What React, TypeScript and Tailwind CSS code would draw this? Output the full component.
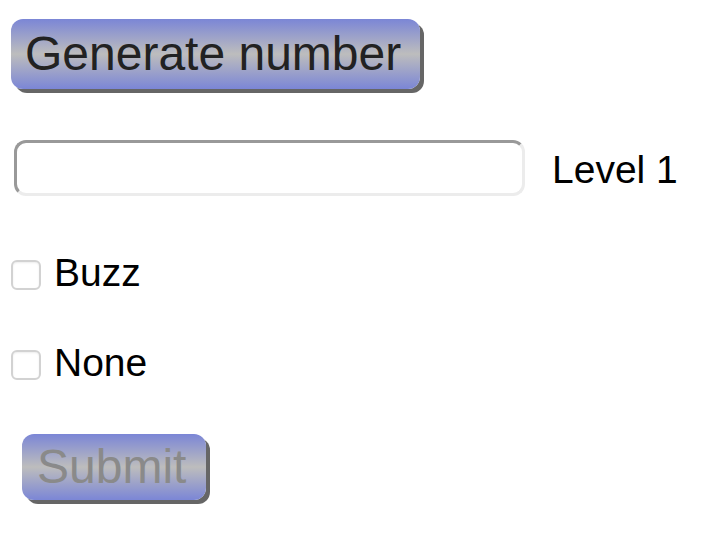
import { useState } from 'react';

const FONT = { fontFamily: '"Liberation Sans", Arial, sans-serif' };

const BUTTON_BASE =
    'flex items-center rounded-[12px] bg-[linear-gradient(to_bottom,#7b86d6,#bdbdbd_50%,#7b86d6)] shadow-[4px_4px_0_0_#666] text-[48px] leading-none';

function Check({ label }: { label: string }) {
    const [checked, setChecked] = useState(false);

    return (
        <label className="flex h-[60px] items-center">
            <input
                type="checkbox"
                checked={checked}
                onChange={(e) => setChecked(e.target.checked)}
                className="ml-[11px] mt-[6px] h-[30px] w-[30px] appearance-none rounded-[6px] border-2 border-[#d2d2d2] bg-white shadow-[inset_0_1px_2px_rgba(0,0,0,0.08)]"
            />
            <span className="ml-[13px] text-[39px] leading-none text-black">{label}</span>
        </label>
    );
}

export default function App() {
    const [value, setValue] = useState('');

    return (
        <div className="flex h-[542px] w-[712px] flex-col bg-white" style={FONT}>
            <button
                type="button"
                className={`${BUTTON_BASE} ml-[11px] mt-[19px] h-[70px] w-[409px] pl-[14px] text-[#222]`}
            >
                Generate number
            </button>

            <div className="mt-[51px] flex items-center">
                <input
                    value={value}
                    onChange={(e) => setValue(e.target.value)}
                    className="ml-[14px] h-[56px] w-[511px] rounded-[12px] border-[3px] border-t-[#999] border-l-[#999] border-r-[#ececec] border-b-[#ececec] bg-white px-3 text-[30px] outline-none"
                />
                <span className="ml-[27px] mt-[2px] text-[39px] leading-none text-black">Level 1</span>
            </div>

            <div className="mt-[46px] flex flex-col gap-[30px]">
                <Check label="Buzz" />
                <Check label="None" />
            </div>

            <button
                type="button"
                disabled
                className={`${BUTTON_BASE} ml-[22px] mt-[42px] h-[66px] w-[184px] pl-[15px] text-[#8a8a8a]`}
            >
                Submit
            </button>
        </div>
    );
}
